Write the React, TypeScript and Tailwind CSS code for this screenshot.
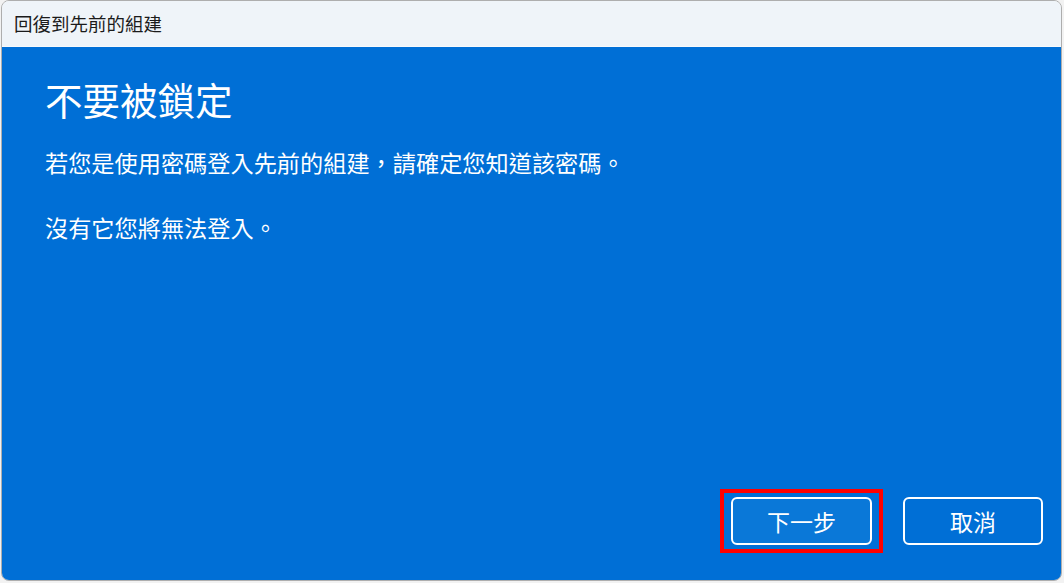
export default function App() {
  return (
    <div
      className="w-[1064px] h-[583px] bg-[#f2f2f2] overflow-hidden"
      style={{ fontFamily: '"Noto Sans CJK TC", "Noto Sans", sans-serif' }}
    >
      <div className="ml-[1px] w-[1061px] h-[581px] border border-[#aeaeae] rounded-[8px] overflow-hidden flex flex-col">
        <div className="h-[46px] shrink-0 bg-[#eff4f9] border-b border-[#f7f9fc] flex items-center pl-[12px]">
          <span className="text-[18.5px] text-[#1b1b1b] leading-none">回復到先前的組建</span>
        </div>
        <div className="flex-1 bg-[#006fd6] flex flex-col text-white pl-[43px] pr-[18px] pb-[27px]">
          <h1 className="mt-[29px] text-[37.5px] leading-[46px] font-normal">不要被鎖定</h1>
          <p className="mt-[24px] text-[23.2px] leading-[32px]">
            若您是使用密碼登入先前的組建，請確定您知道該密碼。
          </p>
          <p className="mt-[33px] text-[23.2px] leading-[32px]">沒有它您將無法登入。</p>
          <div className="flex-1" />
          <div className="flex justify-end items-center gap-[20px]">
            <div className="border-4 border-[#ff0000] px-[7px] py-[4px]">
              <button className="w-[141px] h-[48px] rounded-[6px] border-2 border-white bg-[#0a78d8] text-[23px] text-white leading-none">
                下一步
              </button>
            </div>
            <button className="w-[140px] h-[48px] rounded-[6px] border-2 border-white bg-[#006fd6] text-[23px] text-white leading-none">
              取消
            </button>
          </div>
        </div>
      </div>
    </div>
  );
}
